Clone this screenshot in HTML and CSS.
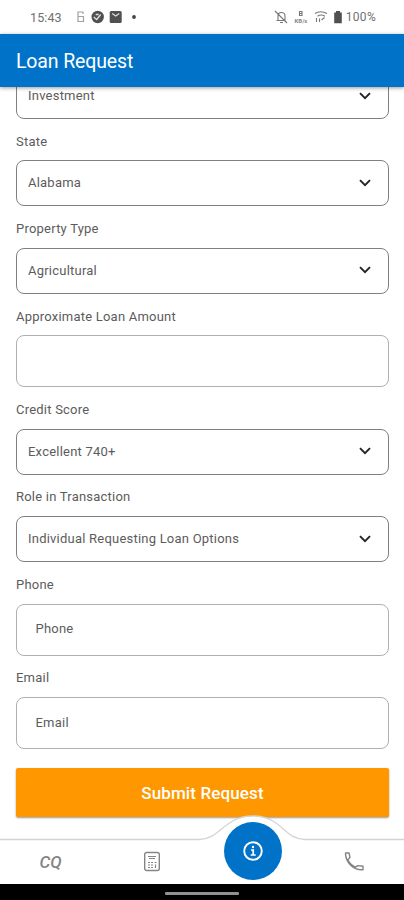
FILE: index.html
```html
<!DOCTYPE html>
<html lang="en">
<head>
<meta charset="utf-8">
<meta name="viewport" content="width=device-width">
<title>Loan Request</title>
<link rel="stylesheet" href="styles.css">
</head>
<body>
<div class="screen">
  <div class="status">
    <span class="time">15:43</span>
    <svg class="left-icons" width="64" height="16" viewBox="0 0 64 16">
      <path d="M5 5V3H0v4.500h5.500v5H0V10M0 7.500V10M5.500 7.500" fill="none" stroke="#a0a0a0" stroke-width="1.2"/>
      <circle cx="19.700" cy="8" r="6.200" fill="#505050"/>
      <path d="M15.700 8l3 2.500 4-5M17.700 5.500h3" fill="none" stroke="#ddd" stroke-width="1.300"/>
      <rect x="31.700" y="2" width="12" height="12" rx="1.500" fill="#505050"/>
      <path d="M34.200 4.500l3.500 2.500 3.500-2.500" fill="none" stroke="#ddd" stroke-width="1.300"/>
      <circle cx="56" cy="8" r="1.900" fill="#444"/>
    </svg>
    <svg class="right-icons" width="70" height="16" viewBox="0 0 70 16">
      <g fill="none" stroke="#777" stroke-width="1.100">
        <path d="M3.500 11.500h8.500V7c0-2-1.500-3.500-3.500-3.500S5 5 5 7v4M7 13.500h3M2 2l12 12"/>
        <path d="M26.500 2.500h2.500v4h-2.500zM26.500 4.500H29"/>
        <path d="M42 4.500c3-2 8-2 12 0M44.500 7.200c2-1.500 5-1.500 7.500 0M43.500 9v4M46.500 13V9.500M48.500 11l3-2.500"/>
      </g>
      <text class="rate" x="21.500" y="13.500">KB/s</text>
      <path d="M63 2h4v1.500h1.800v10.700h-7.600V3.500H63z" fill="#505050"/>
    </svg>
    <span class="battery">100%</span>
  </div>
  <header class="bar"><h1>Loan Request</h1></header>
  <main class="content">
    <form class="form">
      <div class="select"><span>Investment</span><svg class="chev" viewBox="0 0 12 8"><path d="M1 1.200l5 5 5-5"/></svg></div>
      <label class="label">State</label>
      <div class="select"><span>Alabama</span><svg class="chev" viewBox="0 0 12 8"><path d="M1 1.200l5 5 5-5"/></svg></div>
      <label class="label">Property Type</label>
      <div class="select"><span>Agricultural</span><svg class="chev" viewBox="0 0 12 8"><path d="M1 1.200l5 5 5-5"/></svg></div>
      <label class="label">Approximate Loan Amount</label>
      <div class="input"></div>
      <label class="label">Credit Score</label>
      <div class="select"><span>Excellent 740+</span><svg class="chev" viewBox="0 0 12 8"><path d="M1 1.200l5 5 5-5"/></svg></div>
      <label class="label">Role in Transaction</label>
      <div class="select"><span>Individual Requesting Loan Options</span><svg class="chev" viewBox="0 0 12 8"><path d="M1 1.200l5 5 5-5"/></svg></div>
      <label class="label">Phone</label>
      <div class="input"><span>Phone</span></div>
      <label class="label">Email</label>
      <div class="input"><span>Email</span></div>
      <button class="submit" type="button">Submit Request</button>
    </form>
  </main>
  <nav class="tabs">
    <svg class="curve" width="404" height="70" viewBox="0 0 404 70">
      <path d="M-2 25.500H199C220 25.500 224 2 253 2S284 25.500 305 25.500H406V72H-2z" fill="#fff" stroke="#d4d4d4" stroke-width="1.300"/>
    </svg>
    <span class="tab cq">CQ</span>
    <span class="tab">
      <svg width="18" height="22" viewBox="0 0 18 22" fill="none" stroke="#858585">
        <rect x="1.700" y="1.500" width="14.600" height="18" rx="2" stroke-width="1.400"/>
        <path d="M5 5.500h8M6 7.500h6" stroke-width="1"/>
        <path d="M5 11.500h2M8 11.500h2M11.500 11.500h2M5 14h2M8 14h2M5 16.500h2M8 16.500h2M12.500 13.500v3.500" stroke-width="1.200"/>
      </svg>
    </span>
    <span class="tab">
      <span class="info">
        <svg width="22" height="22" viewBox="0 0 22 22" fill="none" stroke="#fff">
          <circle cx="11" cy="11" r="8.800" stroke-width="1.900"/>
          <path d="M9 10h2.200v5M8.700 15h5" stroke-width="1.700"/>
          <circle cx="11" cy="7" r="1.200" fill="#fff" stroke="none"/>
        </svg>
      </span>
    </span>
    <span class="tab">
      <svg width="22" height="22" viewBox="0 0 22 22" fill="none" stroke="#858585" stroke-width="1.400" stroke-linejoin="round">
        <path d="M2.500 2h3.600l.9 4.600-2.200 2.100c1.700 3.300 4.300 5.900 7.700 7.400l2.200-1.500 5.300.7v3.400C10.500 19.500 2.500 11.500 2.500 2z"/>
      </svg>
    </span>
  </nav>
  <div class="gesture"><i></i></div>
</div>
</body>
</html>
```
FILE: styles.css
```css
* { box-sizing: border-box; }
body { margin: 0; font-family: Roboto, "Liberation Sans", sans-serif; background: #fff; }
.screen { width: 404px; height: 900px; display: flex; flex-direction: column; overflow: hidden; }
.status { height: 34px; flex: none; display: flex; align-items: center; padding: 0 28px 0 30px; font-size: 12.5px; letter-spacing: 0.1px; color: #707070; }
.left-icons { margin-left: 16px; overflow: visible; }
.right-icons { margin-left: auto; margin-right: 3px; }
.rate { font-size: 6px; font-weight: 700; letter-spacing: 0; fill: #888; }
.battery { font-size: 12px; letter-spacing: 0.3px; }
.bar { height: 52.500px; flex: none; display: flex; align-items: center; padding: 0 16px; background: #0073c9; box-shadow: 0 1px 4px rgba(0, 0, 0, 0.4); position: relative; z-index: 1; }
h1 { margin: 3px 0 0; font-size: 19.500px; line-height: 24px; font-weight: 400; letter-spacing: -0.140px; color: #fff; }
.content { flex: 1; min-height: 0; overflow: hidden; padding: 0 15px 0 16px; }
.form { margin-top: -13.500px; display: flex; flex-direction: column; }
.select, .input { flex: none; display: flex; align-items: center; font-size: 13px; letter-spacing: 0.220px; color: #5c5c5c; border-radius: 8px; }
.select { height: 46px; padding: 0 17px 1px 11px; justify-content: space-between; border: 1px solid #808080; }
.input { height: 52px; padding: 0 18.500px 2px; border: 1px solid #b0b0b0; }
.chev { width: 12px; height: 8px; fill: none; stroke: #222; stroke-width: 1.900; }
.label { height: 41.450px; flex: none; display: flex; align-items: center; padding-top: 3px; font-size: 13px; letter-spacing: 0.220px; color: #5c5c5c; }
.submit { margin: 19.200px 0 0; height: 49px; flex: none; padding: 0; border: 0; border-radius: 2px; background: #ff9800; color: #fff; font: 500 17px Roboto, sans-serif; letter-spacing: 0.12px; box-shadow: 0 1px 2px rgba(0, 0, 0, 0.4); }
.tabs { height: 45px; flex: none; display: grid; grid-template-columns: repeat(4, 1fr); position: relative; }
.curve { position: absolute; left: 0; bottom: 0; height: 70px; }
.tab { position: relative; display: flex; align-items: center; justify-content: center; color: #858585; }
.cq { font-size: 17px; font-style: italic; font-weight: 500; }
.info { position: absolute; left: 22px; bottom: 4.500px; width: 58px; height: 58px; border-radius: 50%; background: #0073c9; display: flex; align-items: center; justify-content: center; }
.gesture { height: 16px; flex: none; background: #000; display: flex; align-items: center; justify-content: center; }
.gesture i { width: 74px; height: 3px; margin-top: 2px; border-radius: 1px; background: #919191; }
```
